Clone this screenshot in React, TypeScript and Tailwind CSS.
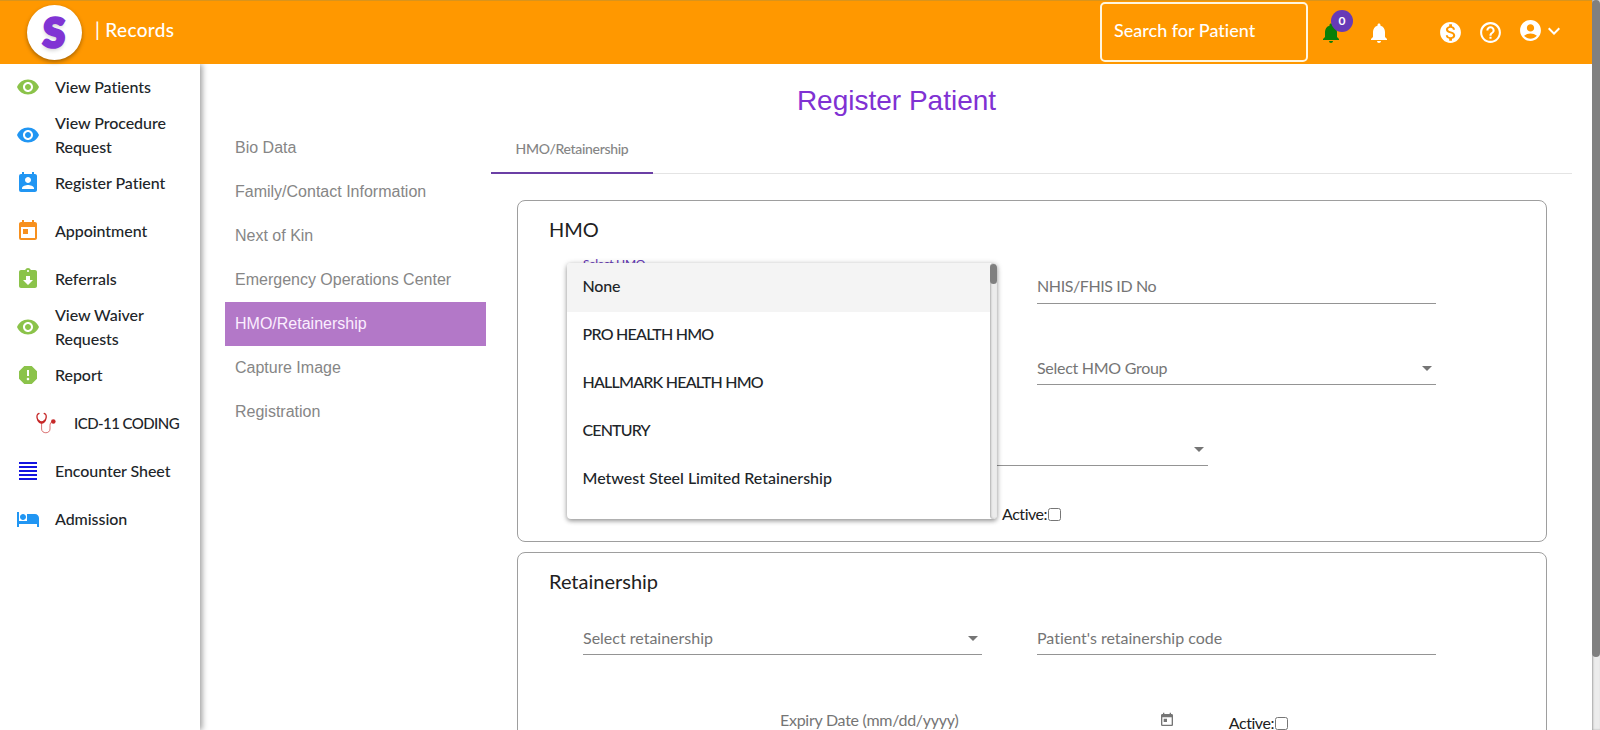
import { useState } from 'react';
import type { ReactNode } from 'react';
import type { IconType } from 'react-icons';
import {
  MdAccountCircle,
  MdArrowDropDown,
  MdAssignmentReturned,
  MdExpandMore,
  MdFormatAlignJustify,
  MdHelpOutline,
  MdHotel,
  MdMonetizationOn,
  MdNotifications,
  MdPermContactCalendar,
  MdReport,
  MdToday,
  MdVisibility,
} from 'react-icons/md';

interface MenuItem {
  label: string;
  icon: IconType;
  color: string;
  nested?: boolean;
}

const StethoscopeIcon = ({ className }: { className?: string }) => (
  <svg viewBox="0 0 20 22" className={className} fill="none" stroke="currentColor" strokeLinecap="round">
    <path d="M3 1.500C.5 2 .6 5 1.600 7.400 2.600 10 4 11 5.600 11s3-1 4-3.600c1-2.400 1.100-5.400-1.400-5.900" strokeWidth="1.300" />
    <path d="M2.500 8.500c1.700 2.300 4.500 2.300 6.200 0" strokeWidth="1.800" />
    <path d="M5.600 11.500v5.500c0 5 8.400 5 8.400 0v-3.500c0-2 .8-3.500 2.500-3.900" strokeWidth=".9" opacity=".75" />
    <circle cx="17.300" cy="9.500" r="2.300" fill="currentColor" stroke="none" />
  </svg>
);

const menuItems: MenuItem[] = [
  { label: 'View Patients', icon: MdVisibility, color: 'text-[#8bc34a]' },
  { label: 'View Procedure Request', icon: MdVisibility, color: 'text-[#2196f3]' },
  { label: 'Register Patient', icon: MdPermContactCalendar, color: 'text-[#2196f3]' },
  { label: 'Appointment', icon: MdToday, color: 'text-[#f7901e]' },
  { label: 'Referrals', icon: MdAssignmentReturned, color: 'text-[#8bc34a]' },
  { label: 'View Waiver Requests', icon: MdVisibility, color: 'text-[#8bc34a]' },
  { label: 'Report', icon: MdReport, color: 'text-[#8bc34a]' },
  { label: 'ICD-11 CODING', icon: StethoscopeIcon as IconType, color: 'text-[#c62828]', nested: true },
  { label: 'Encounter Sheet', icon: MdFormatAlignJustify, color: 'text-[#1414e0]' },
  { label: 'Admission', icon: MdHotel, color: 'text-[#2196f3]' },
];

const steps = [
  'Bio Data',
  'Family/Contact Information',
  'Next of Kin',
  'Emergency Operations Center',
  'HMO/Retainership',
  'Capture Image',
  'Registration',
];

const hmoOptions = [
  { name: 'None', tracking: 'tracking-[-0.2px]' },
  { name: 'PRO HEALTH HMO', tracking: 'tracking-[-0.75px]' },
  { name: 'HALLMARK HEALTH HMO', tracking: 'tracking-[-0.78px]' },
  { name: 'CENTURY', tracking: 'tracking-[-0.85px]' },
  { name: 'Metwest Steel Limited Retainership', tracking: 'tracking-[-0.01px]' },
];

const Header = () => (
  <header className="relative z-20 flex h-16 shrink-0 items-center border-t border-[#d9941c] bg-[#ff9800] text-white">
    <div className="mb-px ml-[27px] flex h-[55px] w-[55px] items-center justify-center rounded-full bg-white shadow-[0_2px_4px_rgba(0,0,0,0.35)]">
      <span className="-skew-x-2 font-['Lato'] text-[40px] leading-none font-black text-[#8034d4] [-webkit-text-stroke:3px_#8034d4] [text-shadow:0_3px_4px_rgba(0,0,0,0.2)]">
        S
      </span>
    </div>
    <span className="mb-[5px] ml-[13px] text-[19px] font-medium tracking-[0.35px]">| Records</span>
    <div className="mb-0.5 ml-auto flex h-[60px] w-[208px] items-center rounded-[5px] border-2 border-[#fff6e0] pb-1 pl-3 text-lg font-medium">
      Search for Patient
    </div>
    <div className="relative ml-[11px]">
      <MdNotifications className="h-6 w-6 text-[#087f08]" />
      <span className="absolute -top-[11px] left-3 flex h-[22px] w-[22px] items-center justify-center rounded-full bg-[#673ab7] text-xs font-bold">
        0
      </span>
    </div>
    <MdNotifications className="ml-6 h-6 w-6" />
    <MdMonetizationOn className="ml-[47px] h-[25px] w-[25px]" />
    <MdHelpOutline className="ml-[15px] h-[25px] w-[25px]" />
    <MdAccountCircle className="mb-1 ml-[15px] h-[25px] w-[25px]" />
    <MdExpandMore className="mr-[26px] mb-1 h-6 w-6 -ml-px" />
  </header>
);

const Sidebar = () => (
  <nav className="z-10 w-[200px] shrink-0 bg-white shadow-[2px_0_6px_rgba(0,0,0,0.4)]">
    {menuItems.map(({ label, icon: Icon, color, nested }) => (
      <a
        key={label}
        className={`flex h-12 items-center leading-6 font-medium text-[#212529] ${nested ? 'gap-[18px] pl-9 text-[15px] tracking-[-0.56px]' : 'gap-[15px] pl-4 text-base tracking-[-0.06px]'}`}
      >
        <Icon className={`mb-0.5 shrink-0 ${nested ? 'h-[22px] w-5' : 'h-6 w-6'} ${color}`} />
        <span className={nested ? 'mb-0.5' : 'mb-0.5 w-[125px]'}>{label}</span>
      </a>
    ))}
  </nav>
);

interface FieldProps {
  label: string;
  select?: boolean;
  className?: string;
}

const Field = ({ label, select, className = '' }: FieldProps) => (
  <div className={`flex h-[34px] items-center justify-between border-b border-[#949494] text-base text-[#757575] ${className}`}>
    <span>{label}</span>
    {select && <MdArrowDropDown className="-mr-[3px] h-6 w-6" />}
  </div>
);

const ActiveCheck = ({ className = '' }: { className?: string }) => (
  <label className={`flex items-center text-base tracking-[-0.45px] text-[#212121] ${className}`}>
    Active:
    <span className="ml-px h-[13px] w-[13px] rounded-[2.500px] border border-[#767676] bg-white" />
  </label>
);

const Card = ({ title, className = '', children }: { title: string; className?: string; children: ReactNode }) => (
  <section className={`relative ml-[26px] w-[1030px] rounded-lg border border-[#9e9e9e] ${className}`}>
    <h2 className="ml-[31px] h-[30px] text-xl leading-[28px] text-[#212121]">{title}</h2>
    {children}
  </section>
);

const HmoPanel = ({ selected, onSelect }: { selected: string; onSelect: (v: string) => void }) => (
  <div className="absolute top-[62px] left-[49px] flex h-64 w-[430px] overflow-hidden rounded bg-white shadow-[0_2px_4px_rgba(0,0,0,0.3),0_1px_6px_rgba(0,0,0,0.2)]">
    <ul className="flex-1">
      {hmoOptions.map(({ name, tracking }) => (
        <li
          key={name}
          onClick={() => onSelect(name)}
          className={`flex items-center pl-[15.5px] text-base font-medium text-[#212529] ${tracking} ${name === selected ? 'h-[49px] bg-[#f4f4f4] pb-[3px]' : 'h-12 pb-1'}`}
        >
          {name}
        </li>
      ))}
    </ul>
    <div className="w-[7px] rounded-full bg-[#ececec] shadow-[inset_1px_0_2px_rgba(0,0,0,0.25)]">
      <div className="mt-px h-5 rounded-full bg-[#808080]" />
    </div>
  </div>
);

export default function App() {
  const [activeStep, setActiveStep] = useState('HMO/Retainership');
  const [hmo, setHmo] = useState('None');

  return (
    <div className="flex h-[730px] w-[1600px] overflow-hidden bg-white font-['Lato',sans-serif] [font-variant-ligatures:none]">
      <div className="flex w-[1568px] flex-1 flex-col">
        <Header />
        <div className="flex min-h-0 flex-1">
          <Sidebar />
          <main className="flex-1 overflow-hidden pl-[25px]">
            <h1 className="mt-[17px] ml-[-24px] h-10 text-center font-['Liberation_Sans',sans-serif] text-[28px] leading-[39px] text-[#8031d3]">
              Register Patient
            </h1>
            <div className="flex">
              <ul className="mt-[5px] w-[261px] shrink-0 font-['Liberation_Sans',sans-serif] text-base">
                {steps.map((step) => (
                  <li
                    key={step}
                    onClick={() => setActiveStep(step)}
                    className={`flex h-11 items-center pb-px pl-2.5 ${step === activeStep ? 'bg-[#b378c8] text-[#fbeeff]' : 'text-[#868686]'}`}
                  >
                    {step}
                  </li>
                ))}
              </ul>
              <div className="ml-[5px] w-[1081px]">
                <div className="flex h-[53px] border-b border-[#e4e4e4]">
                  <div className="-mb-px flex w-[162px] items-center justify-center border-b-2 border-[#6b3fa5] pt-1 text-sm font-medium tracking-[-0.32px] text-[#858585]">
                    HMO/Retainership
                  </div>
                </div>
                <Card title="HMO" className="mt-[26px] h-[342px] pt-3.5">
                  <span className="ml-[65px] block h-[25px] pt-[11px] text-xs leading-4 font-medium tracking-[-0.3px] text-[#673ab7]">
                    Select HMO
                  </span>
                  <Field label="NHIS/FHIS ID No" className="ml-[519px] w-[399px] pb-0.5 tracking-[-0.4px]" />
                  <Field label="Select HMO Group" select className="mt-[47px] ml-[519px] w-[399px] tracking-[-0.28px]" />
                  <Field label="" select className="mt-[47px] ml-[291px] w-[399px]" />
                  <ActiveCheck className="mt-9 ml-[484px]" />
                  <HmoPanel selected={hmo} onSelect={setHmo} />
                </Card>
                <Card title="Retainership" className="mt-2.5 h-[342px] pt-3.5">
                  <div className="mt-6 ml-[65px] flex gap-[55px]">
                    <Field label="Select retainership" select className="w-[399px]" />
                    <Field label="Patient's retainership code" className="w-[399px]" />
                  </div>
                  <div className="mt-[50px] ml-[262px] flex items-center text-base text-[#757575]">
                    <span className="tracking-[-0.27px]">Expiry Date (mm/dd/yyyy)</span>
                    <MdToday className="ml-auto h-4 w-4" />
                    <ActiveCheck className="mt-1.5 mr-[258px] ml-[54px]" />
                  </div>
                </Card>
              </div>
            </div>
          </main>
        </div>
      </div>
      <div className="w-2 shrink-0 bg-[#ececec] shadow-[inset_1px_0_2px_rgba(0,0,0,0.3)]">
        <div className="h-[657px] rounded-full bg-[#808080]" />
      </div>
    </div>
  );
}
